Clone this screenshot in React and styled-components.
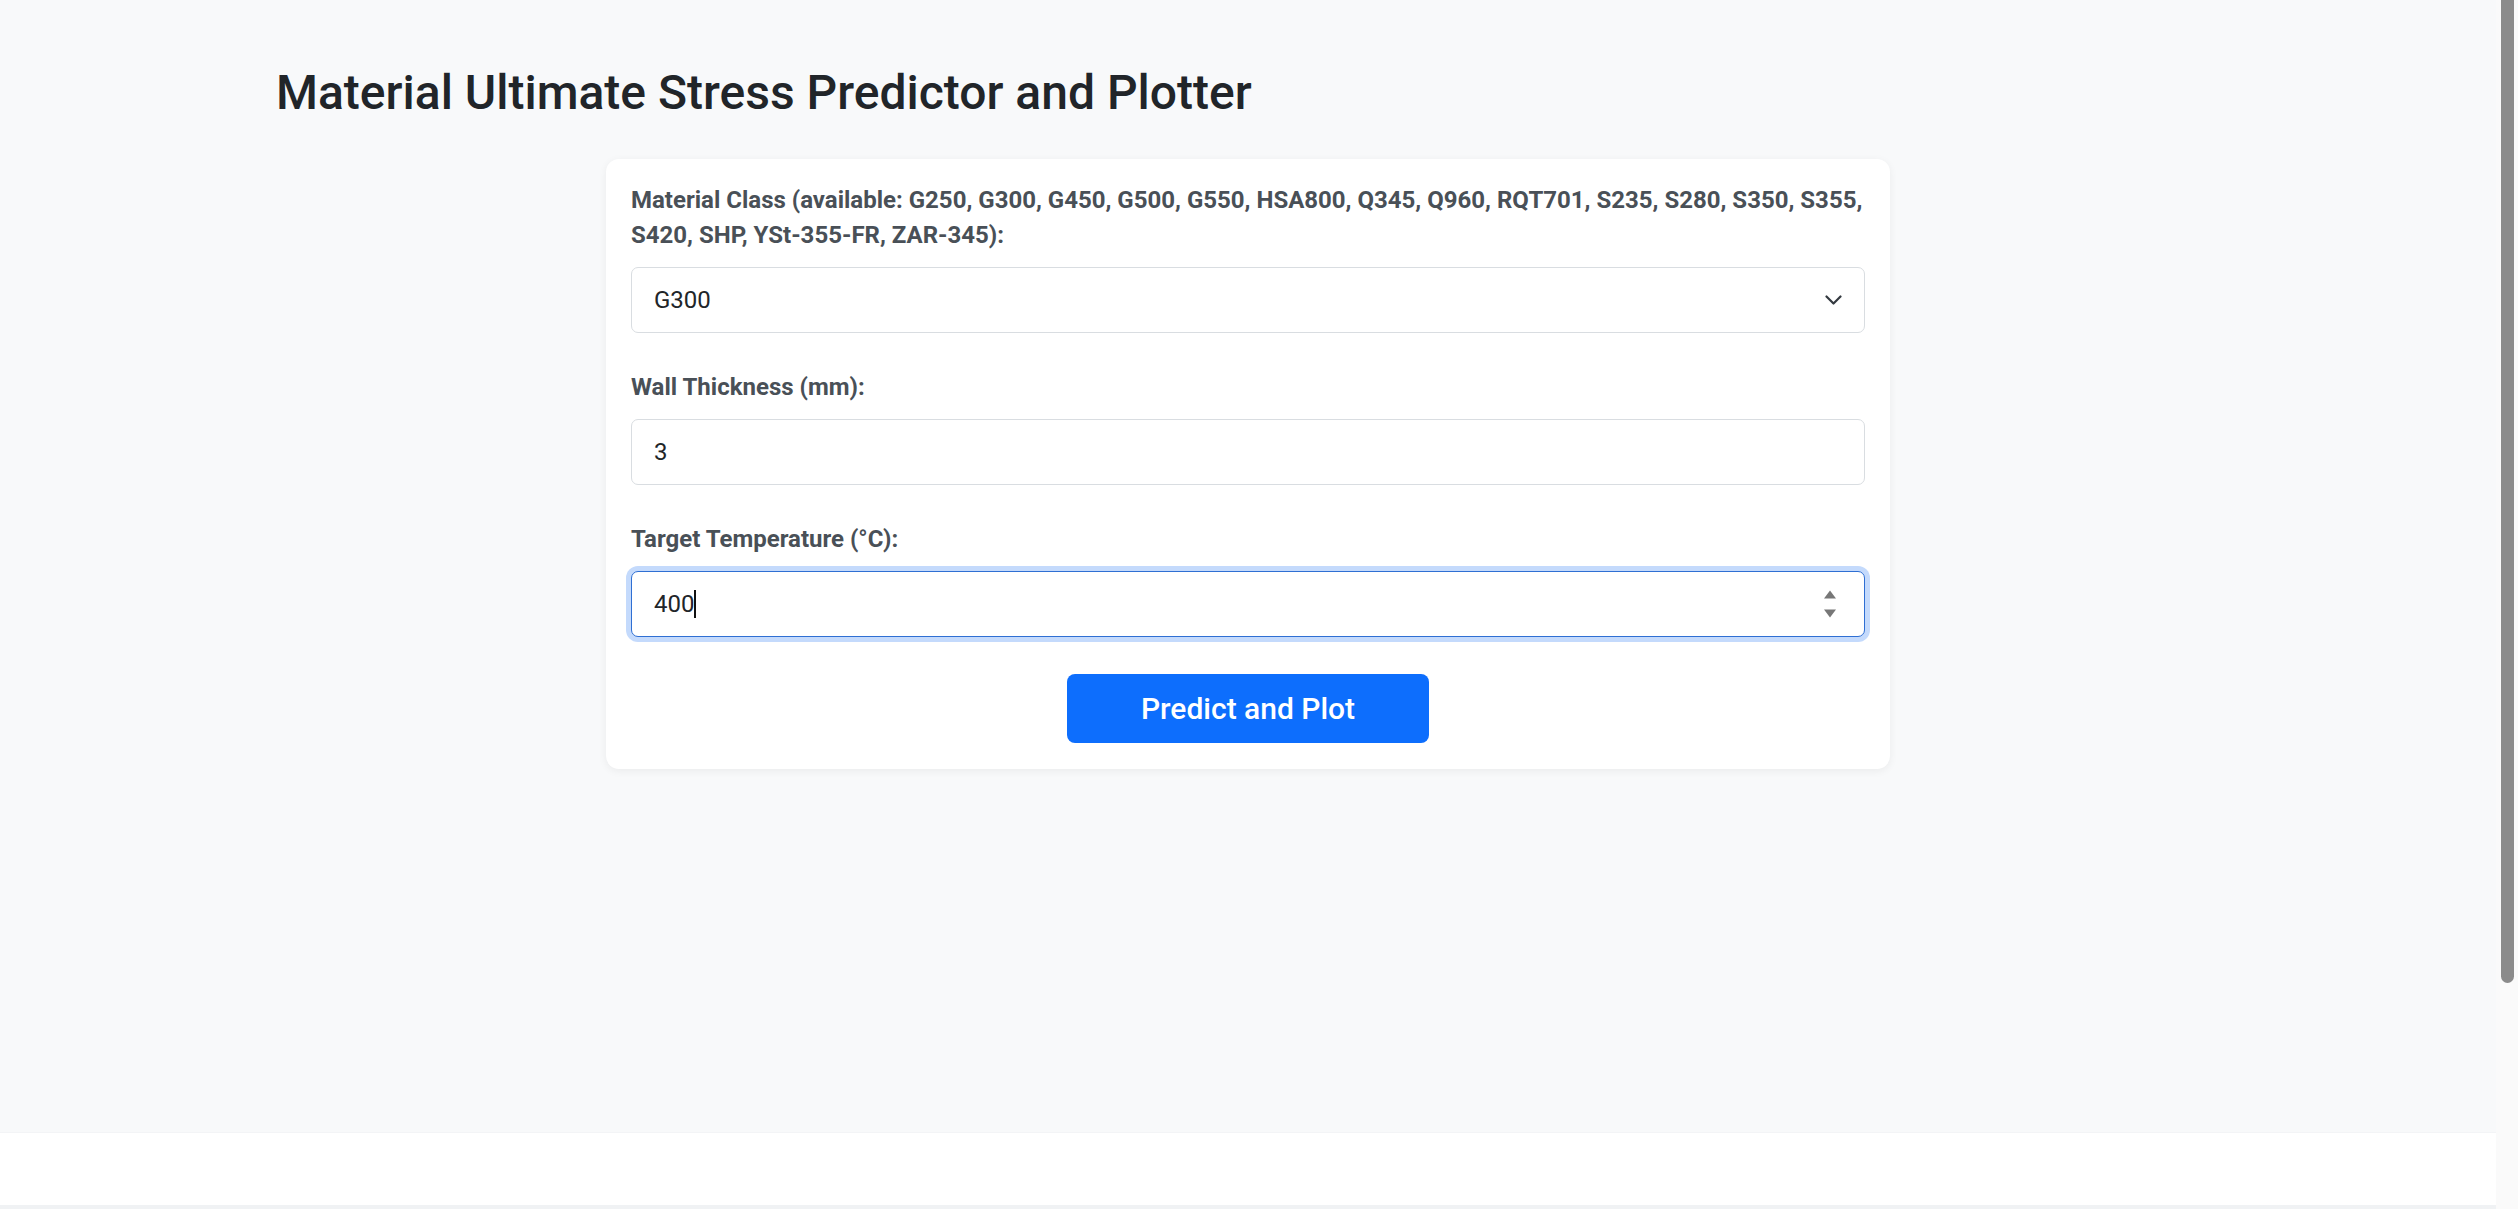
import React from 'react';
import styled, { createGlobalStyle, css } from 'styled-components';

const textDark = '#212529';
const labelGrey = '#495057';
const primary = '#0d6efd';

const GlobalStyle = createGlobalStyle`
  html, body {
    margin: 0;
    padding: 0;
    height: 1209px;
    overflow: hidden;
    background: #ffffff;
    font-family: Roboto, "Liberation Sans", sans-serif;
  }
  * { box-sizing: border-box; }
`;

const Window = styled.div`
  display: flex;
  height: 1209px;
`;

const Page = styled.div`
  flex: 1;
  min-width: 0;
  overflow: hidden;
`;

// the browser's vertical scrollbar, drawn since the page is taller than the window
const ScrollTrack = styled.div`
  width: 22px;
  flex: none;
  background: #fafafa;
  padding: 0 4px 0 5px;
`;

const ScrollThumb = styled.div`
  height: 983px;
  background: #8b8b8b;
  border-radius: 0 0 7px 7px;
`;

const Main = styled.main`
  background: #f8f9fa;
  height: 1133px;
  padding-top: 64px;
  border-bottom: 1px solid #f3f4f6;
`;

const Container = styled.div`
  max-width: 1944px;
  margin: 0 auto;
`;

const Title = styled.h1`
  margin: 0 0 37px;
  font-size: 48px;
  font-weight: 500;
  line-height: 1.2;
  color: ${textDark};
`;

const Card = styled.form`
  width: 1284px;
  margin: 0 auto;
  background: #ffffff;
  border-radius: 13px;
  box-shadow: 0 2px 8px rgba(0, 0, 0, 0.06);
  padding: 24px 25px 26px;
`;

const Field = styled.div`
  margin-bottom: ${({ $last }) => ($last ? '0' : '37px')};
`;

const Label = styled.label`
  display: block;
  margin-bottom: 14px;
  font-size: 24px;
  font-weight: 700;
  line-height: 35px;
  color: ${labelGrey};
`;

const Control = styled.div`
  position: relative;
`;

const controlBase = css`
  display: block;
  width: 100%;
  height: 66px;
  padding: 0 22px;
  font-family: inherit;
  font-size: 24px;
  color: ${textDark};
  background: #ffffff;
  border: 1px solid #d9dde1;
  border-radius: 7px;
  outline: none;
`;

const Select = styled.select`
  ${controlBase}
  appearance: none;
  padding-right: 60px;
`;

const Input = styled.input`
  ${controlBase}
  caret-color: transparent;
  ${({ $focused }) => $focused && css`
    border-color: #2f6fd3;
    box-shadow: 0 0 0 5px #c4dafc;
  `}
`;

const Chevron = styled.svg`
  position: absolute;
  right: 23px;
  top: 50%;
  width: 17px;
  height: 10px;
  margin-top: -5px;
  pointer-events: none;
`;

const Spinner = styled.div`
  position: absolute;
  right: 29px;
  top: 50%;
  transform: translateY(-50%);
  display: flex;
  flex-direction: column;
  gap: 11px;
  pointer-events: none;
`;

const Arrow = styled.span`
  width: 0;
  height: 0;
  border-left: 6px solid transparent;
  border-right: 6px solid transparent;
  ${({ $down }) => $down
    ? css`border-top: 8px solid #777777;`
    : css`border-bottom: 8px solid #777777;`}
`;

const Caret = styled.span`
  position: absolute;
  left: 63px;
  top: 19px;
  width: 2px;
  height: 28px;
  background: #111111;
  pointer-events: none;
`;

const Button = styled.button`
  display: block;
  width: 362px;
  height: 69px;
  margin: 37px auto 0;
  background: ${primary};
  border: none;
  border-radius: 8px;
  color: #ffffff;
  font-family: inherit;
  font-size: 30px;
  font-weight: 500;
  cursor: pointer;
`;

const Results = styled.section`
  height: 72px;
  background: #ffffff;
`;

const Footer = styled.footer`
  height: 283px;
  border-top: 5px solid #f0f2f4;
  background: #ffffff;
`;

const materials = ['G250', 'G300', 'G450', 'G500', 'G550', 'HSA800', 'Q345', 'Q960', 'RQT701', 'S235', 'S280', 'S350', 'S355', 'S420', 'SHP', 'YSt-355-FR', 'ZAR-345'];

const App = () =>
  <>
    <GlobalStyle />
    <Window>
      <Page>
        <Main>
          <Container>
            <Title>Material Ultimate Stress Predictor and Plotter</Title>
            <Card onSubmit={e => e.preventDefault()}>
              <Field>
                <Label htmlFor="material">Material Class (available: {materials.join(', ')}):</Label>
                <Control>
                  <Select id="material" defaultValue="G300">
                    {materials.map(m => <option key={m} value={m}>{m}</option>)}
                  </Select>
                  <Chevron viewBox="0 0 17 10">
                    <path d="M1.5 1.5 L8.5 8.5 L15.5 1.5" fill="none" stroke="#343a40" strokeWidth="2.2" strokeLinecap="round" strokeLinejoin="round" />
                  </Chevron>
                </Control>
              </Field>
              <Field>
                <Label htmlFor="thickness">Wall Thickness (mm):</Label>
                <Control>
                  <Input id="thickness" type="text" defaultValue="3" />
                </Control>
              </Field>
              <Field $last>
                <Label htmlFor="temperature">Target Temperature (°C):</Label>
                <Control>
                  <Input id="temperature" type="text" inputMode="numeric" defaultValue="400" $focused />
                  <Caret />
                  <Spinner>
                    <Arrow />
                    <Arrow $down />
                  </Spinner>
                </Control>
              </Field>
              <Button type="submit">Predict and Plot</Button>
            </Card>
          </Container>
        </Main>
        <Results />
        <Footer />
      </Page>
      <ScrollTrack>
        <ScrollThumb />
      </ScrollTrack>
    </Window>
  </>

export default App;
